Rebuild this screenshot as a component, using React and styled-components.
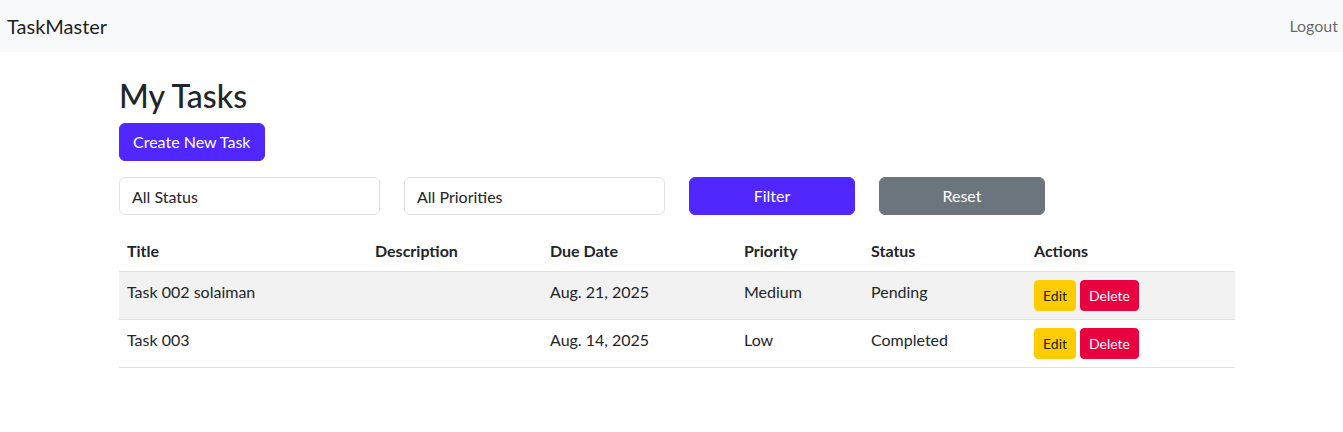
import React from 'react';
import styled, { createGlobalStyle } from 'styled-components';

const GlobalStyle = createGlobalStyle`
  * { box-sizing: border-box; }
  body {
    margin: 0;
    font-family: Lato, "Noto Sans", sans-serif;
    font-size: 16px;
    line-height: 1.5;
    color: #212529;
    background: #fff;
  }
`;

const tasks = [
  { title: 'Task 002 solaiman', description: '', due: 'Aug. 21, 2025', priority: 'Medium', status: 'Pending' },
  { title: 'Task 003', description: '', due: 'Aug. 14, 2025', priority: 'Low', status: 'Completed' },
];

const App = () => {
  return (
    <>
      <GlobalStyle />
      <Navbar>
        <Brand href="#">TaskMaster</Brand>
        <NavLink href="#">Logout</NavLink>
      </Navbar>
      <Container>
        <Heading>My Tasks</Heading>
        <Button $variant="primary">Create New Task</Button>
        <FilterForm>
          <Select defaultValue="">
            <option value="">All Status</option>
          </Select>
          <Select defaultValue="">
            <option value="">All Priorities</option>
          </Select>
          <Button $variant="primary" $block>Filter</Button>
          <Button $variant="secondary" $block>Reset</Button>
        </FilterForm>
        <Table>
          <colgroup>
            <col style={{ width: 248 }} />
            <col style={{ width: 175 }} />
            <col style={{ width: 194 }} />
            <col style={{ width: 127 }} />
            <col style={{ width: 163 }} />
            <col />
          </colgroup>
          <thead>
            <tr>
              <Th>Title</Th>
              <Th>Description</Th>
              <Th>Due Date</Th>
              <Th>Priority</Th>
              <Th>Status</Th>
              <Th>Actions</Th>
            </tr>
          </thead>
          <tbody>
            {tasks.map((task, i) => (
              <Row key={task.title} $striped={i % 2 === 0}>
                <Td>{task.title}</Td>
                <Td>{task.description}</Td>
                <Td>{task.due}</Td>
                <Td>{task.priority}</Td>
                <Td>{task.status}</Td>
                <Td>
                  <Actions>
                    <SmallButton $variant="warning">Edit</SmallButton>
                    <SmallButton $variant="danger">Delete</SmallButton>
                  </Actions>
                </Td>
              </Row>
            ))}
          </tbody>
        </Table>
      </Container>
    </>
  );
};

export default App;

const colors = {
  primary: { bg: '#5028ff', fg: '#fff' },
  secondary: { bg: '#6c757d', fg: '#fff' },
  warning: { bg: '#ffcc00', fg: '#212529' },
  danger: { bg: '#e8003f', fg: '#fff' },
};

const Navbar = styled.nav`
  height: 52px;
  background: #f8f9fa;
  display: flex;
  align-items: center;
  justify-content: space-between;
  padding: 0 5px 0 7px;
`;

const Brand = styled.a`
  font-size: 20px;
  line-height: 30px;
  color: rgba(0, 0, 0, 0.9);
  text-decoration: none;
`;

const NavLink = styled.a`
  font-size: 16px;
  color: rgba(0, 0, 0, 0.6);
  text-decoration: none;
`;

const Container = styled.main`
  width: 1116px;
  margin: 25px 0 0 119px;
`;

const Heading = styled.h2`
  margin: 0 0 8px;
  font-size: 32px;
  font-weight: 500;
  line-height: 1.2;
`;

const Button = styled.button`
  display: inline-block;
  width: ${(p) => (p.$block ? '100%' : 'auto')};
  padding: 6px 13px;
  font-family: inherit;
  font-size: 16px;
  line-height: 24px;
  border: 1px solid ${(p) => colors[p.$variant].bg};
  border-radius: 6px;
  background: ${(p) => colors[p.$variant].bg};
  color: ${(p) => colors[p.$variant].fg};
  cursor: pointer;
`;

const SmallButton = styled(Button)`
  padding: 4px 8px;
  font-size: 14px;
  line-height: 21px;
  border-radius: 4px;
`;

const FilterForm = styled.form`
  display: grid;
  grid-template-columns: 261px 261px 166px 166px;
  column-gap: 24px;
  margin: 16px 0;
`;

const Select = styled.select`
  appearance: none;
  height: 38px;
  padding: 6px 12px;
  font-family: inherit;
  font-size: 16px;
  color: #212529;
  background: #fff;
  border: 1px solid #dee2e6;
  border-radius: 6px;
`;

const Table = styled.table`
  width: 100%;
  border-collapse: collapse;
  table-layout: fixed;
`;

const Th = styled.th`
  text-align: left;
  padding: 8px;
  font-weight: 700;
  border-bottom: 1px solid #dee2e6;
`;

const Row = styled.tr`
  background: ${(p) => (p.$striped ? '#f2f2f2' : '#fff')};
`;

const Td = styled.td`
  padding: 8px;
  vertical-align: top;
  border-bottom: 1px solid #dee2e6;
`;

const Actions = styled.div`
  display: flex;
  gap: 4px;
`;
